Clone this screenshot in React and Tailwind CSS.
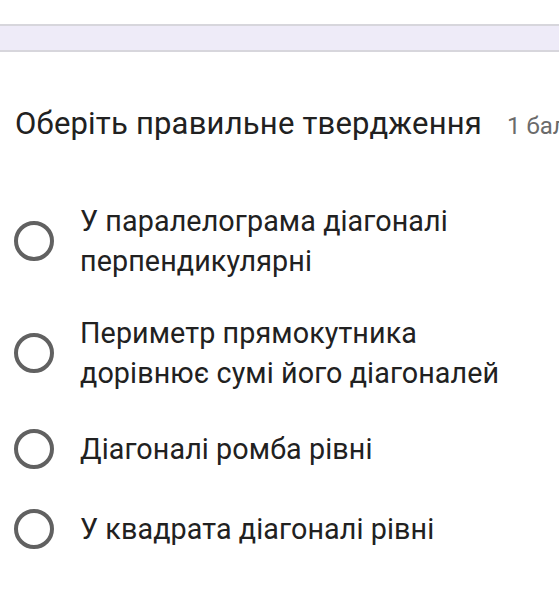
import React from 'react';

const options = [
  ['У паралелограма діагоналі', 'перпендикулярні'],
  ['Периметр прямокутника', 'дорівнює сумі його діагоналей'],
  ['Діагоналі ромба рівні'],
  ['У квадрата діагоналі рівні'],
];

export default function App() {
  return (
    <div className="w-[559px] h-[601px] overflow-hidden bg-white text-[#212121]" style={{ fontFamily: 'Roboto, "Noto Sans", sans-serif' }}>
      <div className="h-6" />
      <div className="h-[28px] bg-[#eeebf8] border-y-2 border-[#d7d6dc]" />

      <div className="mt-[54px] pl-[15px] flex items-baseline whitespace-nowrap">
        <span className="text-[31px] leading-[36px] tracking-[0.2px]">Оберіть правильне твердження</span>
        <span className="ml-[25px] text-[24px] text-[#6b6b6b]">1 бал</span>
      </div>

      <div className="mt-[57px] flex flex-col gap-8">
        {options.map((lines, i) => (
          <div key={i} className="flex items-center min-h-12 pl-[14px]">
            <div className="w-10 h-10 shrink-0 rounded-full border-4 border-[#616161]" />
            <div className="ml-[26px] text-[28.7px] leading-[40px] tracking-[0.1px]">
              {lines.map((l, j) => (
                <div key={j}>{l}</div>
              ))}
            </div>
          </div>
        ))}
      </div>
    </div>
  );
}
